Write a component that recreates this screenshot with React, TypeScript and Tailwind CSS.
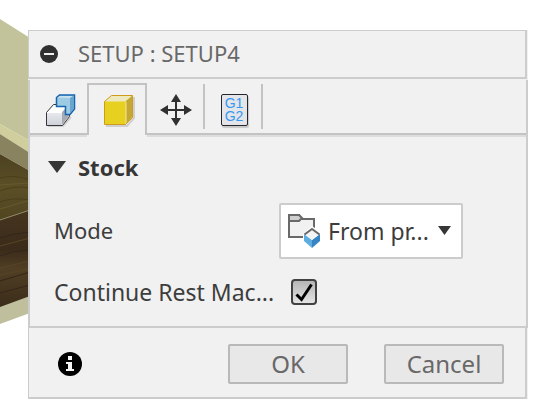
import { useState } from "react";
import type { ReactNode } from "react";

function Backdrop() {
  return (
    <svg className="absolute left-0 top-0" width="30" height="418" viewBox="0 0 30 418" aria-hidden="true">
      <defs>
        <linearGradient id="wood" x1="0" y1="0" x2="0" y2="1">
          <stop offset="0" stopColor="#4c4120" />
          <stop offset="0.5" stopColor="#5b4f26" />
          <stop offset="1" stopColor="#4f4520" />
        </linearGradient>
        <linearGradient id="woodDark" x1="0" y1="0" x2="0" y2="1">
          <stop offset="0" stopColor="#46351f" />
          <stop offset="0.4" stopColor="#3a2b1a" />
          <stop offset="0.6" stopColor="#513f24" />
          <stop offset="1" stopColor="#3a2c1a" />
        </linearGradient>
      </defs>
      <path d="M0 19 30 38V141L0 124Z" fill="#c3c39b" />
      <path d="M0 124 30 141V153L0 134Z" fill="#d0ce9c" />
      <path d="M0 134 30 153V171L0 154Z" fill="#89835f" />
      <path d="M0 154 30 171V210L0 220Z" fill="url(#wood)" />
      <path d="M0 220 30 210V297L0 308Z" fill="url(#woodDark)" />
      <path d="M0 178q15-4 30 2M0 191q14-6 30-3M0 202q12-5 30-2" stroke="#4a3f1c" strokeWidth="1" fill="none" />
      <path d="M0 185l30-2M0 209l30-9" stroke="#66592d" strokeWidth="1" fill="none" />
      <path d="M0 220 30 210" stroke="#8a8465" strokeWidth="1" />
      <path d="M0 238q14-5 30-6M0 256q14-6 30-6M0 281l30-9M0 293l30-8" stroke="#33271a" strokeWidth="1" fill="none" />
      <path d="M0 246l30-8M0 268l30-7M0 275l30-6" stroke="#584526" strokeWidth="1" fill="none" />
      <path d="M0 307 30 296V313L0 324Z" fill="#bfbe9d" />
    </svg>
  );
}

function SetupIcon() {
  return (
    <svg width="32" height="34" viewBox="0 0 32 34" aria-hidden="true">
      <defs>
        <linearGradient id="whiteFace" x1="0" y1="0" x2="0" y2="1">
          <stop offset="0" stopColor="#e6e8ec" />
          <stop offset="1" stopColor="#cfd3d9" />
        </linearGradient>
      </defs>
      <path d="M3 32h15l8-9" stroke="#cfcfcf" strokeWidth="2" fill="none" />
      <path d="M1.500 18.500 8.500 10.500H24.500V22.500L17.500 31.500H1.500Z" fill="#fff" stroke="#35353d" />
      <path d="M2 19h15v12H2z" fill="url(#whiteFace)" />
      <path d="M17 18l7-7v11l-7 9z" fill="#a6aab2" />
      <path d="M11.500 3.500 14.500 1H29.500V15L25 20.500H20.500V12.500H11.500Z" fill="#9dcbe3" stroke="#1764af" strokeWidth="1.500" />
      <path d="M12.500 3.500 15 2h13l-3 2z" fill="#c8e2ee" />
      <path d="M25 4l4-2.500v13L25 19z" fill="#69a6cf" />
    </svg>
  );
}

function StockIcon() {
  return (
    <svg width="32" height="34" viewBox="0 0 32 34" aria-hidden="true">
      <path d="M3 33h21l7-8V4" stroke="#cfcfcf" strokeWidth="2" fill="none" />
      <path d="M1.500 8.500 8.500 2.500H29.500V24.500L22.500 31.500H1.500Z" fill="#e7d01f" />
      <path d="M1.500 8.500 8.500 2.500H29.500L22.500 8.500Z" fill="#eee9bd" />
      <path d="M23 8l6-5v21l-6 7z" fill="#c4a735" />
      <path d="M23 9v22" stroke="#f0e79a" />
      <path d="M1.500 8.500 8.500 2.500H29.500V24.500L22.500 31.500H1.500Z" fill="none" stroke="#cf9b1d" />
    </svg>
  );
}

function MoveIcon() {
  return (
    <svg width="32" height="32" viewBox="0 0 32 32" fill="#303030" aria-hidden="true">
      <path d="M15 7h2v18h-2zM7 15h18v2H7z" />
      <path d="M16 0l5 8H11zM16 32l-5-8h10zM0 16l8-5v10zM32 16l-8 5V11z" />
    </svg>
  );
}

function PostIcon() {
  return (
    <span className="flex h-8 w-[27px] items-center justify-center rounded-xs border border-[#26272c] bg-[#e3e5e8] font-['Liberation_Sans',sans-serif] text-[14px] leading-[13px] text-[#3598f5] shadow-[1px_2px_1px_#c8c8c8]">
      <span>G1<br />G2</span>
    </span>
  );
}

function FolderIcon() {
  return (
    <svg className="pointer-events-none absolute left-2 top-2" width="36" height="40" viewBox="0 0 36 40" aria-hidden="true">
      <path d="M2 4h10l3 4h12v18H2z" fill="#f1f1f1" stroke="#696969" strokeWidth="2" />
      <path d="M2 4h10l3 3-3 3H2z" fill="#cfcfcf" stroke="#696969" strokeWidth="2" />
      <path d="M25 15 36 23V37H16V23Z" fill="#fff" />
      <path d="M17 23l8 6v8l-8-7z" fill="#5eade0" />
      <path d="M33 23l-8 6v8l8-7z" fill="#3585c4" />
      <path d="M18 23.500 25 18 32 23.500 25 29z" fill="#f4f4f4" />
      <path d="M17.500 23.500 25 18 32.500 23.500" fill="none" stroke="#686868" strokeWidth="2" />
    </svg>
  );
}

function Tab({ label, selected, className, children }: { label: string; selected?: boolean; className: string; children: ReactNode }) {
  return (
    <button type="button" role="tab" aria-label={label} aria-selected={!!selected} className={`flex shrink-0 items-center justify-center ${className}`}>
      {children}
    </button>
  );
}

const idleTab = "border-b-2 border-[#c3c3c3] shadow-[0_2px_0_#dddddd]";

export default function App() {
  const [checked, setChecked] = useState(true);
  return (
    <main className="relative min-h-screen bg-white pb-5 pl-7 pr-3.5 pt-[30px] font-['Noto_Sans',sans-serif] text-[22px] leading-8 text-[#3d3d3d]">
      <Backdrop />
      <div className="relative bg-[#f1f1f1]">
        <header className="mr-px flex h-[49px] items-center gap-5 border-b-2 border-l border-r-2 border-t border-[#cccccc] pl-[11px]">
          <button type="button" aria-label="Collapse">
            <svg width="18" height="18" viewBox="0 0 18 18" aria-hidden="true">
              <circle cx="9" cy="9" r="9" fill="#303030" />
              <path d="M4 8h10v2H4z" fill="#f1f1f1" />
            </svg>
          </button>
          <h1 className="pb-0.5 text-[#686868]">SETUP : SETUP4</h1>
        </header>

        <section className="mt-px border-x-2 border-b-2 border-[#cccccc]">
          <div role="tablist" className="flex h-[55px]">
            <Tab label="Setup" className={`w-[57px] pl-1 pt-2 ${idleTab}`}><SetupIcon /></Tab>
            <Tab label="Stock" selected className="mt-[3px] w-[60px] border-x-2 border-t-2 border-[#c3c3c3] pl-1"><StockIcon /></Tab>
            <div className={`flex flex-1 ${idleTab}`}>
              <Tab label="Work coordinate system" className="w-14 pl-0.5 pt-1.5"><MoveIcon /></Tab>
              <span className="mb-1 mt-1 w-0.5 bg-[#c3c3c3]" />
              <Tab label="Post process" className="w-14 pl-0.5 pt-1.5"><PostIcon /></Tab>
              <span className="mb-1 mt-1 w-0.5 bg-[#c3c3c3]" />
            </div>
          </div>

          <div className="px-6 pb-[18px] pt-4">
            <h2 className="-ml-1.5">
              <button type="button" aria-expanded="true" className="flex items-center gap-3 font-bold text-[#363636]">
                <svg width="18" height="12" viewBox="0 0 18 12" fill="#363636" aria-hidden="true"><path d="M0 0h18L9 12z" /></svg>
                Stock
              </button>
            </h2>
            <div className="mt-5 flex items-center">
              <label htmlFor="mode" className="w-[225px] shrink-0 pb-0.5">Mode</label>
              <div className="relative h-14 w-[184px]">
                <select id="mode" className="h-full w-full appearance-none rounded-xs border-2 border-[#cccccc] bg-white pl-[47px] text-[23px] text-[#3d3d3d]">
                  <option>From pr...</option>
                </select>
                <FolderIcon />
                <svg className="pointer-events-none absolute right-3 top-[23px]" width="13" height="9" viewBox="0 0 13 9" fill="#363636" aria-hidden="true"><path d="M0 0h13L6.500 9z" /></svg>
              </div>
            </div>
            <div className="mt-[17px] flex items-center">
              <label htmlFor="rest" className="w-[237px] shrink-0 text-[23px]">Continue Rest Mac...</label>
              <div className="relative h-[26px] w-[26px]">
                <input id="rest" type="checkbox" checked={checked} onChange={(e) => setChecked(e.target.checked)} className="block h-full w-full appearance-none rounded border-2 border-[#414141] bg-linear-to-b from-[#b5b5b5] to-[#e4e4e4]" />
                {checked && (
                  <svg className="pointer-events-none absolute left-0 top-0" width="26" height="26" viewBox="0 0 26 26" aria-hidden="true">
                    <path d="M5.500 15.500 10.500 20.500 20.500 5.500" fill="none" stroke="#000" strokeWidth="3" />
                  </svg>
                )}
              </div>
            </div>
          </div>
        </section>

        <footer className="mr-px flex h-[71px] items-center border-b-2 border-l border-r-2 border-[#cccccc] pl-7 pr-[21px] pt-0.5">
          <button type="button" aria-label="Information">
            <svg width="26" height="26" viewBox="0 0 26 26" aria-hidden="true">
              <circle cx="13" cy="13" r="12" fill="#000" />
              <path d="M11 5h4v4h-4zM9 11h6v7h2v2H9v-2h2v-5H9z" fill="#f5f5f5" />
            </svg>
          </button>
          <div className="ml-auto flex gap-9 text-[24px] text-[#686868]">
            <button type="button" className="h-10 w-[120px] rounded-xs border-2 border-[#b9b9b9] bg-[#e8e8e8]">OK</button>
            <button type="button" className="h-10 w-[120px] rounded-xs border-2 border-[#b9b9b9] bg-[#e8e8e8]">Cancel</button>
          </div>
        </footer>
      </div>
    </main>
  );
}
